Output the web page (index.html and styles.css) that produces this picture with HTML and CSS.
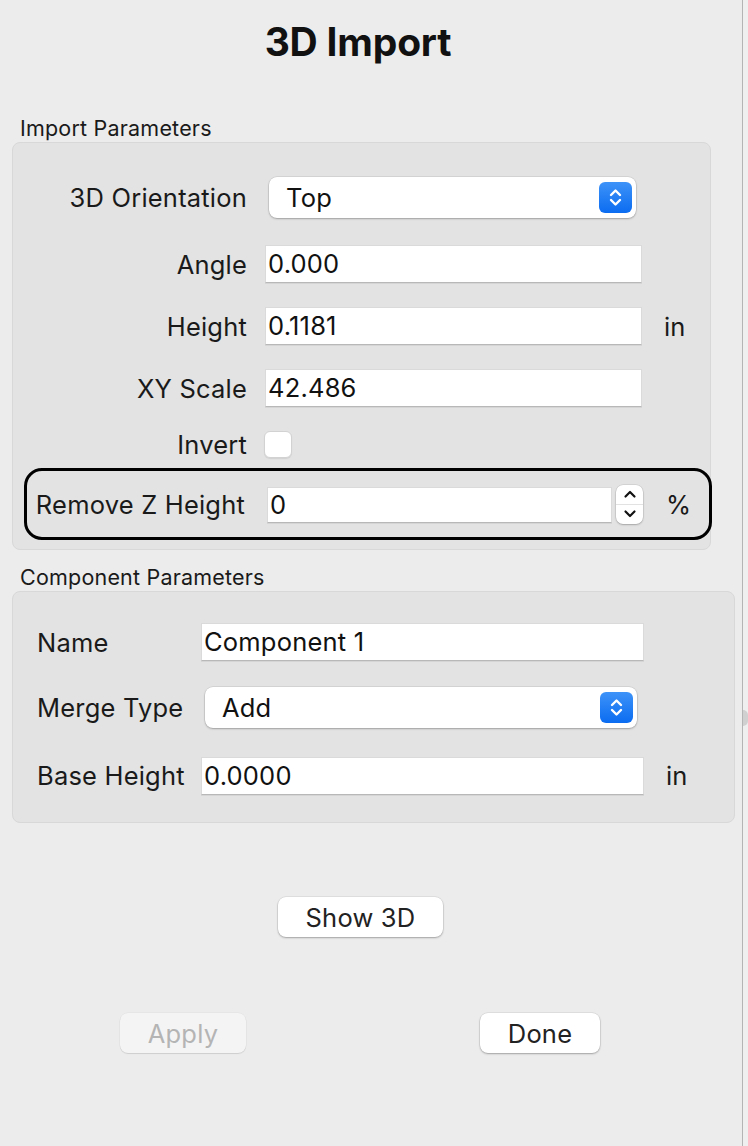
FILE: index.html
```html
<!DOCTYPE html>
<html>
<head>
<meta charset="utf-8">
<link rel="stylesheet" href="styles.css">
</head>
<body>
<div class="window">
  <h1 class="title">3D Import</h1>

  <div class="group-title">Import Parameters</div>
  <div class="group group-import">
    <div class="row row-orient">
      <div class="label">3D Orientation</div>
      <div class="popup popup-orient">
        <span class="popup-text">Top</span>
        <span class="popup-btn">
          <svg width="15" height="21" viewBox="0 0 15 21"><path d="M3 8 L7.5 3.5 L12 8 M3 13 L7.5 17.5 L12 13" fill="none" stroke="#fff" stroke-width="2.4" stroke-linecap="round" stroke-linejoin="round"/></svg>
        </span>
      </div>
    </div>
    <div class="row">
      <div class="label">Angle</div>
      <div class="field">0.000</div>
    </div>
    <div class="row">
      <div class="label">Height</div>
      <div class="field">0.1181</div>
      <div class="unit">in</div>
    </div>
    <div class="row">
      <div class="label">XY Scale</div>
      <div class="field">42.486</div>
    </div>
    <div class="row row-check">
      <div class="label">Invert</div>
      <div class="checkbox"></div>
    </div>
    <div class="row highlight">
      <div class="label label-hl">Remove Z Height</div>
      <div class="field field-hl">0</div>
      <div class="stepper">
        <span class="step step-up"><svg width="14" height="10" viewBox="0 0 14 10"><path d="M2.5 7.5 L7 3 L11.5 7.5" fill="none" stroke="#111" stroke-width="2.2" stroke-linecap="round" stroke-linejoin="round"/></svg></span>
        <span class="step step-down"><svg width="14" height="10" viewBox="0 0 14 10"><path d="M2.5 2.5 L7 7 L11.5 2.5" fill="none" stroke="#111" stroke-width="2.2" stroke-linecap="round" stroke-linejoin="round"/></svg></span>
      </div>
      <div class="unit unit-pct">%</div>
    </div>
  </div>

  <div class="group-title group-title-2">Component Parameters</div>
  <div class="group group-comp">
    <div class="crow">
      <div class="clabel">Name</div>
      <div class="field cfield">Component 1</div>
    </div>
    <div class="crow crow-merge">
      <div class="clabel">Merge Type</div>
      <div class="popup popup-merge">
        <span class="popup-text">Add</span>
        <span class="popup-btn">
          <svg width="15" height="21" viewBox="0 0 15 21"><path d="M3 8 L7.5 3.5 L12 8 M3 13 L7.5 17.5 L12 13" fill="none" stroke="#fff" stroke-width="2.4" stroke-linecap="round" stroke-linejoin="round"/></svg>
        </span>
      </div>
    </div>
    <div class="crow crow-base">
      <div class="clabel">Base Height</div>
      <div class="field cfield">0.0000</div>
      <div class="unit cunit">in</div>
    </div>
  </div>

  <div class="show-row">
    <button class="btn btn-show">Show 3D</button>
  </div>

  <div class="bottom-row">
    <button class="btn btn-apply">Apply</button>
    <button class="btn btn-done">Done</button>
  </div>
</div>
<div class="strip">
  <div class="handle"></div>
</div>
</body>
</html>
```

FILE: styles.css
```css
html, body {
  margin: 0;
  padding: 0;
}

body {
  width: 748px;
  height: 1146px;
  display: flex;
  background: #ececec;
  font-family: "Inter", "Liberation Sans", sans-serif;
  color: #1c1c1c;
  overflow: hidden;
}

.window {
  width: 742px;
  height: 1146px;
  border-right: 1px solid #b4b4b4;
  display: flex;
  flex-direction: column;
  background: #ececec;
}

.strip {
  flex: 1;
  background: #efefef;
  display: flex;
  flex-direction: column;
}

.handle {
  margin-top: 710px;
  width: 5px;
  height: 16px;
  border-radius: 0 8px 8px 0;
  background: #d0d0d0;
}

.title {
  margin: 18px 0 0 0;
  padding-right: 26px;
  text-align: center;
  font-size: 39px;
  line-height: 48px;
  font-weight: 700;
  letter-spacing: -0.2px;
  color: #111;
}

.group-title {
  margin: 51px 0 0 20px;
  font-size: 21.5px;
  line-height: 22px;
  letter-spacing: 0.2px;
  color: #1a1a1a;
}

.group-title-2 {
  margin-top: 16px;
}

.group {
  margin: 3px 0 0 12px;
  width: 697px;
  background: #e3e3e3;
  border: 1px solid #d8d8d8;
  border-radius: 8px;
  display: flex;
  flex-direction: column;
}

.group-import {
  padding: 33px 0 9px 0;
}

.row {
  display: flex;
  align-items: center;
  height: 38px;
  margin-top: 24px;
}

.row-orient {
  height: 42px;
  margin-top: 0;
}

.row-orient + .row {
  margin-top: 27px;
}

.row-check {
  height: 28px;
  margin-top: 23px;
}

.label {
  width: 234px;
  text-align: right;
  font-size: 25.5px;
  letter-spacing: 0.2px;
  color: #1a1a1a;
  flex-shrink: 0;
}

.field {
  margin-left: 18px;
  width: 377px;
  height: 38px;
  box-sizing: border-box;
  background: #fff;
  border: 1px solid #dadada;
  border-bottom-color: #b8b8b8;
  box-shadow: 0 1px 0 rgba(0, 0, 0, 0.06);
  font-size: 25.5px;
  letter-spacing: 0.2px;
  line-height: 36px;
  padding-left: 2px;
  color: #111;
}

.unit {
  margin-left: 22px;
  font-size: 25.5px;
  color: #1a1a1a;
}

.popup {
  display: flex;
  align-items: center;
  justify-content: space-between;
  height: 41px;
  box-sizing: border-box;
  background: #fff;
  border-radius: 8px;
  box-shadow: 0 0 0 0.5px rgba(0, 0, 0, 0.12), 0 1px 2px rgba(0, 0, 0, 0.25);
  padding: 0 4px 0 17px;
}

.popup-orient {
  margin-left: 22px;
  width: 367px;
}

.popup-text {
  font-size: 25.5px;
  letter-spacing: 0.2px;
  color: #111;
}

.popup-btn {
  width: 33px;
  height: 31px;
  border-radius: 6px;
  background: linear-gradient(#3e93f8, #0b6cf1);
  display: flex;
  align-items: center;
  justify-content: center;
}

.checkbox {
  margin-left: 17px;
  width: 28px;
  height: 27px;
  box-sizing: border-box;
  border-radius: 6px;
  background: #fff;
  border: 1px solid #d2d2d2;
  box-shadow: 0 1px 1px rgba(0, 0, 0, 0.08);
}

.highlight {
  margin: 10px 0 0 11px;
  width: 688px;
  height: 72px;
  box-sizing: border-box;
  border: 3px solid #000;
  border-radius: 18px;
}

.label-hl {
  width: 218px;
}

.field-hl {
  margin-left: 22px;
  width: 345px;
  height: 36px;
  line-height: 34px;
  margin-top: 1px;
}

.stepper {
  margin-left: 4px;
  width: 27px;
  height: 39px;
  box-sizing: border-box;
  border-radius: 7px;
  background: #fff;
  box-shadow: 0 0 0 0.5px rgba(0, 0, 0, 0.12), 0 1px 2px rgba(0, 0, 0, 0.22);
  display: flex;
  flex-direction: column;
}

.step {
  flex: 1;
  display: flex;
  align-items: center;
  justify-content: center;
}

.step-up {
  border-bottom: 1px solid #e2e2e2;
}

.unit-pct {
  margin-left: 23px;
}

.group-comp {
  padding: 31px 0 27px 24px;
}

.crow {
  display: flex;
  align-items: center;
  height: 38px;
}

.crow-merge {
  height: 41px;
  margin-top: 26px;
}

.crow-base {
  height: 39px;
  margin-top: 28px;
}

.clabel {
  width: 164px;
  font-size: 25.5px;
  letter-spacing: 0.2px;
  color: #1a1a1a;
  flex-shrink: 0;
}

.cfield {
  margin-left: 0;
  width: 443px;
}

.popup-merge {
  margin-left: 4px;
  width: 432px;
}

.cunit {
  margin-left: 22px;
}

.show-row {
  display: flex;
  margin-top: 74px;
  padding-left: 278px;
}

.btn {
  font-family: "Inter", "Liberation Sans", sans-serif;
  font-size: 25.5px;
  letter-spacing: 0.2px;
  height: 40px;
  border: none;
  border-radius: 8px;
  background: #fff;
  color: #222;
  padding: 0;
  box-shadow: 0 0 0 0.5px rgba(0, 0, 0, 0.1), 0 1px 2px rgba(0, 0, 0, 0.28);
}

.btn-show {
  width: 165px;
}

.bottom-row {
  display: flex;
  margin-top: 76px;
  padding-left: 120px;
}

.btn-apply {
  width: 126px;
  background: #f4f4f4;
  color: #b4b4b4;
  box-shadow: 0 0 0 0.5px rgba(0, 0, 0, 0.05), 0 1px 1px rgba(0, 0, 0, 0.1);
}

.btn-done {
  width: 120px;
  margin-left: 234px;
}
```
